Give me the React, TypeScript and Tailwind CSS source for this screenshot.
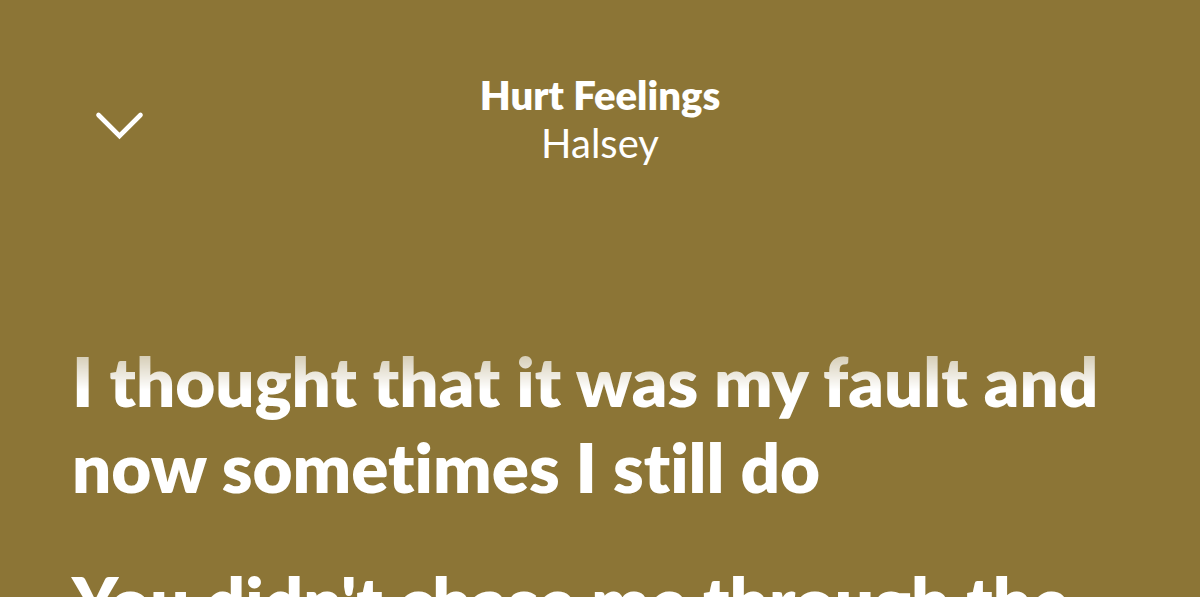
export default function App() {
  return (
    <main className="h-screen overflow-hidden bg-[#8c7536] font-['Lato',sans-serif] text-white [font-variant-ligatures:none]">
      <header className="grid grid-cols-[1fr_auto_1fr] items-center px-[72px] pt-[71px]">
        <button type="button" aria-label="Close lyrics" className="flex h-24 w-24 items-center justify-center">
          <svg viewBox="0 0 96 96" className="h-24 w-24" fill="none" stroke="currentColor" strokeWidth="4.6" strokeLinecap="round">
            <path d="M26.5 44 47.5 65 68.5 44" />
          </svg>
        </button>
        <div className="text-center">
          <h1 className="text-[40px] leading-[48px] font-extrabold">Hurt Feelings</h1>
          <p className="text-[40px] leading-[48px]">Halsey</p>
        </div>
      </header>
      <section className="mt-[127px] [mask-image:linear-gradient(to_bottom,transparent,black_96px)] px-[72px] pt-11 text-[69px] leading-[86px] font-extrabold">
        <p>I thought that it was my fault and now sometimes I still do</p>
        <p className="mt-12">You didn't chase me through the</p>
      </section>
    </main>
  );
}
